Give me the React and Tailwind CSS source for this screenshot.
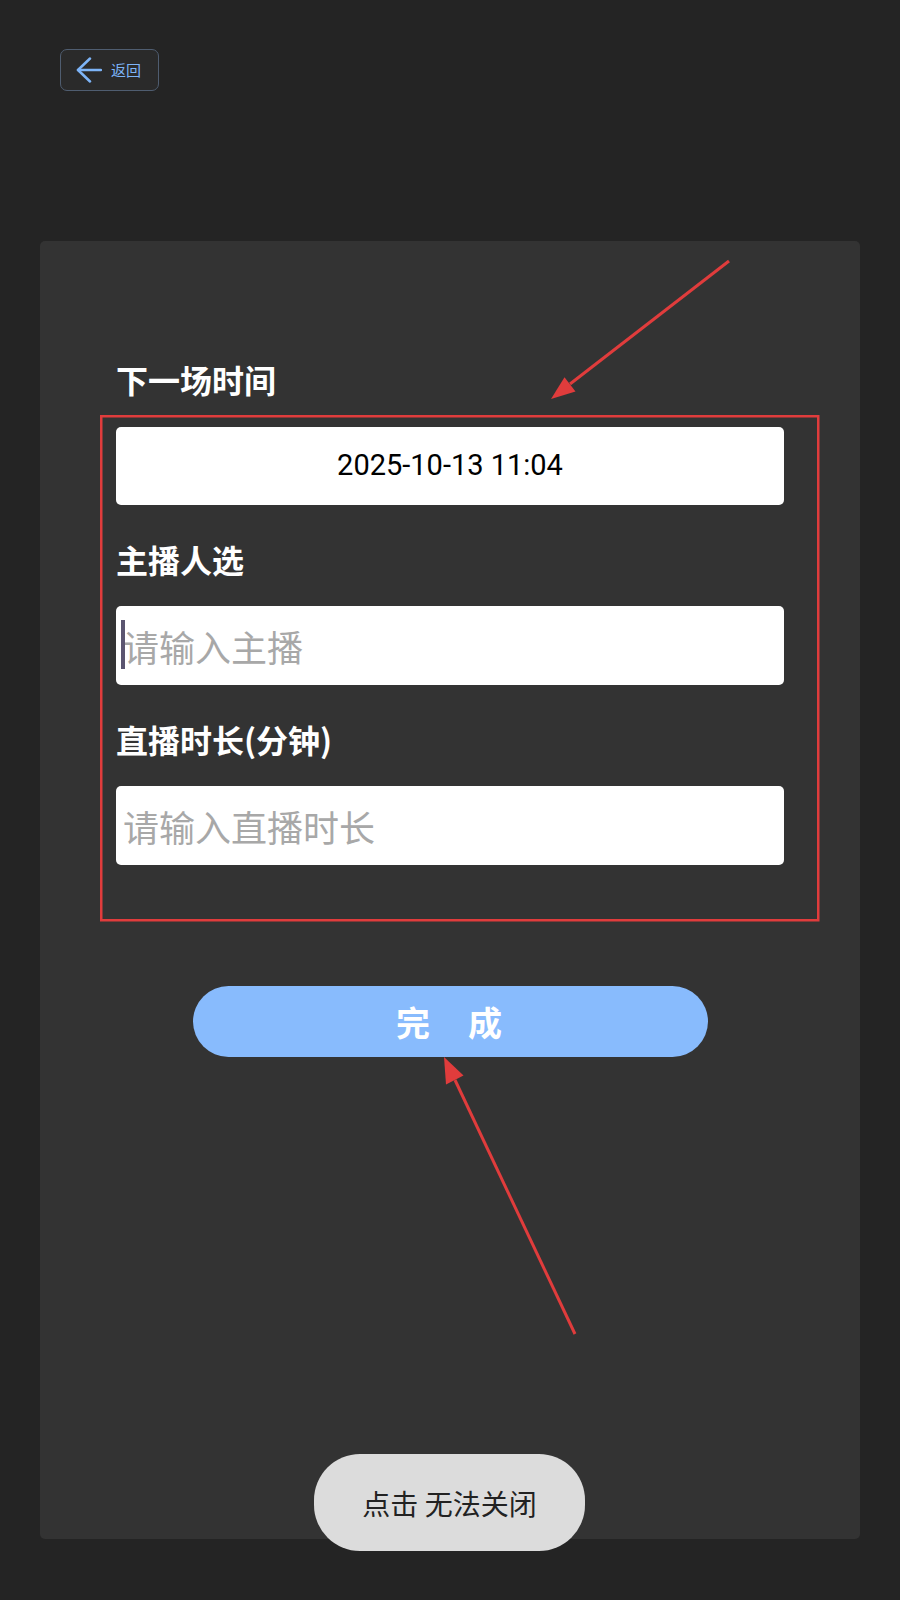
import React from "react";

const cjk = { fontFamily: '"Noto Sans CJK SC", "Noto Sans", sans-serif' };

function Label({ children }) {
  return (
    <div className="text-[32px] leading-[44px] font-bold text-white" style={cjk}>
      {children}
    </div>
  );
}

function FakeInput({ placeholder, caret }) {
  return (
    <div className="relative h-[79px] bg-white rounded-[5px] flex items-center pl-[7px]">
      {caret && (
        <span className="absolute left-[5px] top-[14px] w-[4px] h-[49px] bg-[#5b5570]" />
      )}
      <span className="text-[36px] text-[#a8a8a8]" style={cjk}>
        {placeholder}
      </span>
    </div>
  );
}

export default function App() {
  return (
    <div className="relative w-[900px] h-[1600px] bg-[#242424] overflow-hidden">
      {/* Top bar */}
      <div className="pt-[49px] pl-[60px]">
        <button className="flex items-center gap-[9px] w-[99px] h-[42px] pl-[15px] rounded-[7px] border border-[#4f5d70] bg-[#2a2a2a] text-[#7db4f7]">
          <svg width="26" height="26" viewBox="0 0 26 26" fill="none" stroke="currentColor" strokeWidth="2.5" strokeLinecap="round" strokeLinejoin="round">
            <path d="M25 13H2" />
            <path d="M14 1.5 2 13l12 11.5" />
          </svg>
          <span className="text-[15px]" style={cjk}>返回</span>
        </button>
      </div>

      {/* Card */}
      <div className="mx-[40px] mt-[150px] h-[1298px] bg-[#333333] rounded-[5px] px-[76px] pt-[116px]">
        <Label>下一场时间</Label>
        <div className="mt-[26px] h-[78px] bg-white rounded-[5px] flex items-center justify-center">
          <span
            className="text-[29px] text-black"
            style={{ fontFamily: "Roboto, sans-serif" }}
          >
            2025-10-13 11:04
          </span>
        </div>

        <div className="mt-[32px]">
          <Label>主播人选</Label>
        </div>
        <div className="mt-[25px]">
          <FakeInput placeholder="请输入主播" caret />
        </div>

        <div className="mt-[32px]">
          <Label>直播时长(分钟)</Label>
        </div>
        <div className="mt-[25px]">
          <FakeInput placeholder="请输入直播时长" />
        </div>

        <div className="flex justify-center mt-[121px]">
          <button
            className="w-[515px] h-[71px] rounded-full bg-[#88bbfd] text-white text-[34px] tracking-[2px] font-bold"
            style={cjk}
          >
            完　成
          </button>
        </div>
      </div>

      {/* Toast */}
      <div
        className="absolute top-[1454px] left-[314px] w-[271px] h-[97px] rounded-[46px] bg-[#dcdcdc] flex items-center justify-center text-[28px] text-[#222222]"
        style={cjk}
      >
        点击 无法关闭
      </div>

      {/* Annotation overlay */}
      <svg
        className="absolute inset-0 pointer-events-none"
        width="900"
        height="1600"
        viewBox="0 0 900 1600"
      >
        <rect
          x="101.25"
          y="416.25"
          width="717"
          height="504"
          fill="none"
          stroke="#e03c3c"
          strokeWidth="2.5"
        />
        <line x1="729" y1="261" x2="570" y2="384" stroke="#e03c3c" strokeWidth="3" />
        <polygon points="551,399 575.5,391.4 564.5,377.2" fill="#e03c3c" />
        <line x1="575" y1="1334" x2="455" y2="1080" stroke="#e03c3c" strokeWidth="3" />
        <polygon points="444,1057 463.5,1075.5 446,1084.5" fill="#e03c3c" />
      </svg>
    </div>
  );
}
